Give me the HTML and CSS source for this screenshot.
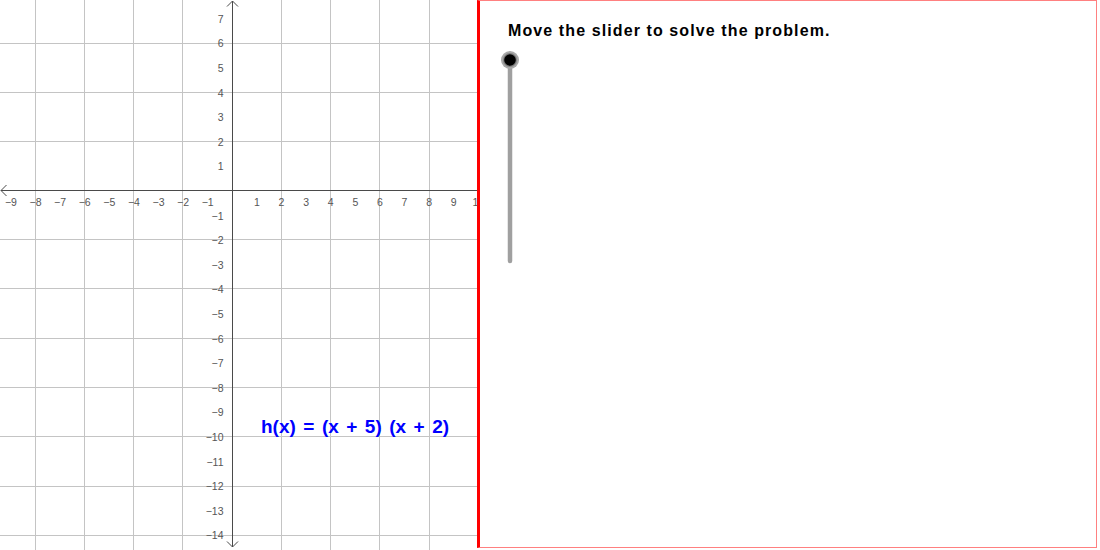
FILE: index.html
```html
<!DOCTYPE html>
<html>
<head>
<meta charset="utf-8">
<link rel="stylesheet" href="styles.css">
</head>
<body>
<div class="app">
  <div class="graph">
    <svg class="plot" width="477" height="550" viewBox="0 0 477 550">
      <g class="grid">
        <line x1="35.5" y1="0" x2="35.5" y2="550"/>
        <line x1="84.5" y1="0" x2="84.5" y2="550"/>
        <line x1="133.5" y1="0" x2="133.5" y2="550"/>
        <line x1="182.5" y1="0" x2="182.5" y2="550"/>
        <line x1="281.5" y1="0" x2="281.5" y2="550"/>
        <line x1="330.5" y1="0" x2="330.5" y2="550"/>
        <line x1="379.5" y1="0" x2="379.5" y2="550"/>
        <line x1="429.5" y1="0" x2="429.5" y2="550"/>
        <line x1="0" y1="43.5" x2="477" y2="43.5"/>
        <line x1="0" y1="92.5" x2="477" y2="92.5"/>
        <line x1="0" y1="141.5" x2="477" y2="141.5"/>
        <line x1="0" y1="239.5" x2="477" y2="239.5"/>
        <line x1="0" y1="288.5" x2="477" y2="288.5"/>
        <line x1="0" y1="338.5" x2="477" y2="338.5"/>
        <line x1="0" y1="387.5" x2="477" y2="387.5"/>
        <line x1="0" y1="436.5" x2="477" y2="436.5"/>
        <line x1="0" y1="486.5" x2="477" y2="486.5"/>
        <line x1="0" y1="535.5" x2="477" y2="535.5"/>
      </g>
      <g class="axis">
        <line x1="1" y1="190.5" x2="477" y2="190.5"/>
        <line x1="232.5" y1="1" x2="232.5" y2="547"/>
        <polyline points="6.5,185 1,190.5 6.5,196"/>
        <polyline points="227,6.5 232.5,1 238,6.5"/>
        <polyline points="227,541.5 232.5,547 238,541.5"/>
      </g>
      <g class="xl">
        <text x="10.9" y="206">−9</text>
        <text x="35.5" y="206">−8</text>
        <text x="60.1" y="206">−7</text>
        <text x="84.7" y="206">−6</text>
        <text x="109.3" y="206">−5</text>
        <text x="133.9" y="206">−4</text>
        <text x="158.5" y="206">−3</text>
        <text x="183.1" y="206">−2</text>
        <text x="207.7" y="206">−1</text>
        <text x="256.9" y="206">1</text>
        <text x="281.5" y="206">2</text>
        <text x="306.1" y="206">3</text>
        <text x="330.7" y="206">4</text>
        <text x="355.3" y="206">5</text>
        <text x="379.9" y="206">6</text>
        <text x="404.5" y="206">7</text>
        <text x="429.1" y="206">8</text>
        <text x="453.7" y="206">9</text>
        <text x="478.3" y="206">10</text>
      </g>
      <g class="yl">
        <text x="223.5" y="22.8">7</text>
        <text x="223.5" y="47.4">6</text>
        <text x="223.5" y="72">5</text>
        <text x="223.5" y="96.6">4</text>
        <text x="223.5" y="121.2">3</text>
        <text x="223.5" y="145.8">2</text>
        <text x="223.5" y="170.4">1</text>
        <text x="223.5" y="219.6">−1</text>
        <text x="223.5" y="244.2">−2</text>
        <text x="223.5" y="268.8">−3</text>
        <text x="223.5" y="293.4">−4</text>
        <text x="223.5" y="318">−5</text>
        <text x="223.5" y="342.6">−6</text>
        <text x="223.5" y="367.2">−7</text>
        <text x="223.5" y="391.8">−8</text>
        <text x="223.5" y="416.4">−9</text>
        <text x="223.5" y="441">−10</text>
        <text x="223.5" y="465.6">−11</text>
        <text x="223.5" y="490.2">−12</text>
        <text x="223.5" y="514.8">−13</text>
        <text x="223.5" y="539.4">−14</text>
      </g>
      <text class="func" x="261" y="433">h(x) = (x + 5) (x + 2)</text>
    </svg>
  </div>
  <div class="panel">
    <p class="title">Move the slider to solve the problem.</p>
    <svg class="slider" width="22" height="216" viewBox="0 0 22 216">
      <line class="track" x1="11" y1="10" x2="11" y2="211"/>
      <circle class="halo" cx="11" cy="10" r="9"/>
      <circle class="ring" cx="11" cy="10" r="7"/>
      <circle class="knob" cx="11" cy="10" r="5.8"/>
    </svg>
  </div>
</div>
</body>
</html>
```

FILE: styles.css
```css
html, body {
  margin: 0;
  padding: 0;
  background: #ffffff;
}

.app {
  display: flex;
  width: 1100px;
  height: 550px;
  overflow: hidden;
}

.graph {
  width: 477px;
  height: 550px;
  flex: none;
  overflow: hidden;
}

.plot {
  display: block;
}

.grid line {
  stroke: #c4c4c4;
  stroke-width: 1;
}

.axis line,
.axis polyline {
  stroke: #4a4a4a;
  stroke-width: 1;
  fill: none;
}

.xl text,
.yl text {
  font-family: "Liberation Sans", Arial, sans-serif;
  font-size: 10.5px;
  fill: #555555;
}

.xl text {
  text-anchor: middle;
}

.yl text {
  text-anchor: end;
}

.func {
  font-family: "Liberation Sans", Arial, sans-serif;
  font-weight: bold;
  font-size: 19px;
  word-spacing: 2.2px;
  fill: #0000ff;
  white-space: pre;
}

.panel {
  flex: none;
  width: 616px;
  height: 546px;
  border-left: 3px solid #ff0000;
  border-top: 1px solid #ff8080;
  border-right: 1px solid #ff8080;
  border-bottom: 1px solid #ff8080;
  display: flex;
  flex-direction: column;
  align-items: flex-start;
}

.title {
  margin: 20px 0 0 28px;
  font-family: "Liberation Sans", Arial, sans-serif;
  font-weight: bold;
  font-size: 16px;
  line-height: 20px;
  letter-spacing: 1.1px;
  color: #000000;
}

.slider {
  display: block;
  margin: 9px 0 0 19px;
}

.track {
  stroke: #a0a0a0;
  stroke-width: 4.5;
  stroke-linecap: round;
}

.halo {
  fill: #a8a8a8;
}

.ring {
  fill: #808080;
}

.knob {
  fill: #000000;
}
```
